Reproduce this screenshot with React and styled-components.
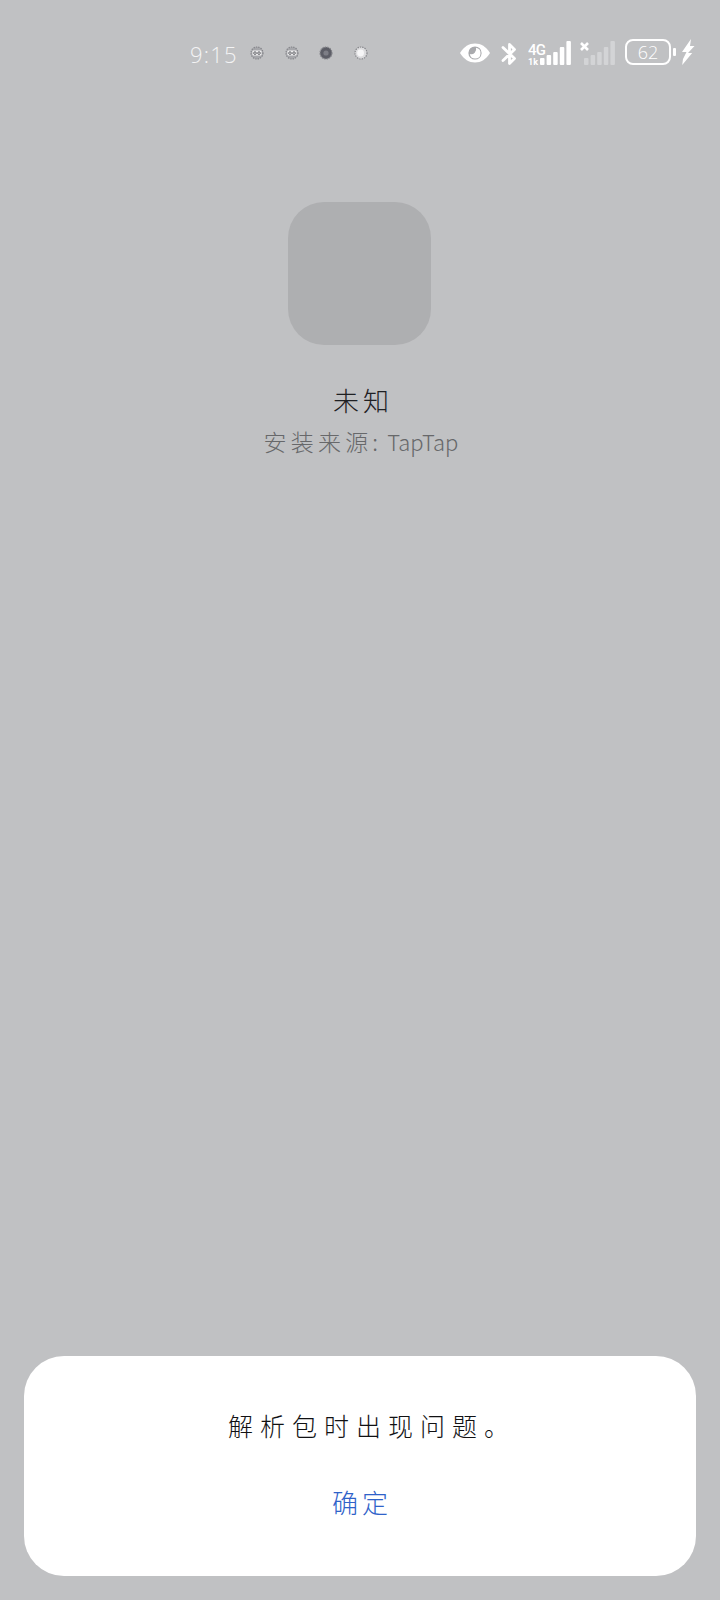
import React from 'react';
import styled, { createGlobalStyle } from 'styled-components';

const GlobalStyle = createGlobalStyle`
    html, body {
        margin: 0;
        padding: 0;
        background: #c0c1c3;
    }
    body {
        font-family: "Noto Sans CJK SC", "Noto Sans", sans-serif;
    }
`

const Page = styled.div`
    width: 720px;
    height: 1600px;
    display: flex;
    flex-direction: column;
    background: #c0c1c3;
    overflow: hidden;
`

const StatusBar = styled.div`
    height: 66px;
    padding: 39px 25px 0 190px;
    box-sizing: border-box;
    display: flex;
    align-items: flex-start;
    color: #fff;
`

const Time = styled.span`
    width: 56px;
    font-family: "Open Sans", sans-serif;
    font-weight: 300;
    font-size: 22px;
    line-height: 30px;
    letter-spacing: 1.2px;
    color: #f4f4f5;
`

const NotifRow = styled.div`
    display: flex;
    gap: 20.6px;
    margin-top: 7px;
    margin-left: 4px;
`

const StatusIcons = styled.div`
    margin-left: auto;
    display: flex;
    align-items: flex-start;
    height: 27px;
`

const Slot = styled.div`
    margin-left: ${p => p.$gap || 0}px;
    margin-top: ${p => p.$top || 0}px;
    display: flex;
`

const Battery = styled.div`
    width: 46px;
    height: 26px;
    box-sizing: border-box;
    border: 2px solid #fff;
    border-radius: 8px;
    margin-left: 10px;
    display: flex;
    align-items: center;
    justify-content: center;
    font-family: "Open Sans", sans-serif;
    font-weight: 300;
    font-size: 18px;
    color: #fff;
`

const Nub = styled.div`
    width: 3px;
    height: 8px;
    margin: 9px 0 0 2px;
    background: #fff;
    border-radius: 1px;
`

const Info = styled.div`
    display: flex;
    flex-direction: column;
    align-items: center;
    padding: 136px 2px 0 0;
    flex: 1;
`

const AppIcon = styled.div`
    width: 143px;
    height: 143px;
    border-radius: 36px;
    background: #aeafb1;
`

const AppName = styled.div`
    margin-top: 36px;
    padding-left: 8px;
    font-size: 26px;
    font-weight: 300;
    line-height: 38px;
    letter-spacing: 4px;
    color: #1f2023;
`

const Source = styled.div`
    margin-top: 5px;
    padding-left: 4px;
    font-size: 23px;
    font-weight: 300;
    line-height: 34px;
    letter-spacing: 4.2px;
    color: #67686a;
`

const Latin = styled.span`
    letter-spacing: 0;
    font-size: 22px;
`

const Dialog = styled.div`
    margin: 0 24px 24px;
    height: 220px;
    box-sizing: border-box;
    padding-top: 49px;
    background: #fff;
    border-radius: 40px;
    display: flex;
    flex-direction: column;
    align-items: center;
`

const Message = styled.div`
    padding-left: 24px;
    font-size: 25px;
    font-weight: 300;
    line-height: 40px;
    letter-spacing: 7px;
    color: #111113;
`

const ConfirmButton = styled.button`
    margin-top: 37px;
    padding: 0 2px 0 6px;
    border: none;
    background: none;
    font-family: inherit;
    font-size: 26px;
    font-weight: 300;
    line-height: 40px;
    letter-spacing: 4px;
    color: #2f62c9;
`

const SignalWrap = styled.div`
    margin-top: 2px;
`

function NotifIcon({ dark, open }) {
    const fill = dark ? '#5c5d66' : '#a6a7ab'
    return (
        <svg width="14" height="14" viewBox="0 0 14 14">
            <circle cx="7" cy="7" r="6" fill={open ? '#dcdcde' : fill} stroke={open ? '#87888c' : '#85868b'} strokeWidth="1.2" strokeDasharray="1.4 1" />
            {!dark && !open && (
                <>
                    <rect x="2.4" y="4.6" width="9.2" height="5" rx="1" fill="#eeeeef" />
                    <circle cx="5" cy="7.1" r="1.3" fill="none" stroke="#55565b" strokeWidth="0.9" />
                    <circle cx="9" cy="7.1" r="1.3" fill="none" stroke="#55565b" strokeWidth="0.9" />
                </>
            )}
            {dark && <circle cx="7" cy="7" r="2.6" fill="#7d7e86" />}
            {open && <circle cx="6.6" cy="7" r="3.4" fill="#f6f6f7" />}
        </svg>
    )
}

function Eye() {
    return (
        <svg width="32" height="22" viewBox="0 0 32 22">
            <path d="M1 11C5 4.5 10 1.5 16 1.5S27 4.5 31 11c-4 6.500-9 9.500-15 9.500S5 17.500 1 11z" fill="#fff" />
            <circle cx="16" cy="11" r="6.600" fill="#a9aaad" />
            <path d="M17 5.800a5.400 5.400 0 1 1-6.200 6.200 5 5 0 0 0 6.200-6.200z" fill="#fff" />
        </svg>
    )
}

function Bluetooth() {
    return (
        <svg width="18" height="24" viewBox="0 0 18 24">
            <path d="M3 5.500L14.500 16.500 9.500 21.500V15M9.500 9V2.500L14.500 7.500 3 18.500" fill="none" stroke="#fff" strokeWidth="2.800" strokeLinejoin="round" strokeLinecap="round" />
        </svg>
    )
}

function Signal({ color, heights }) {
    return (
        <svg width="31" height="24" viewBox="0 0 31 24">
            {heights.map((h, i) => (
                <rect key={i} x={i * 6.6} y={24 - h} width="4.500" height={h} rx="1" fill={color} />
            ))}
        </svg>
    )
}

function NetLabel() {
    return (
        <svg width="20" height="24" viewBox="0 0 20 24">
            <text x="0" y="13" fontFamily="Roboto, sans-serif" fontWeight="500" fontSize="15" fill="#fff" textLength="18">4G</text>
            <text x="0" y="23" fontFamily="Roboto, sans-serif" fontWeight="700" fontSize="9" fill="#fff" textLength="10">1k</text>
        </svg>
    )
}

function NoSim() {
    return (
        <svg width="9" height="9" viewBox="0 0 9 9">
            <path d="M1 1l7 7M8 1L1 8" stroke="#fff" strokeWidth="2.600" />
        </svg>
    )
}

function Bolt() {
    return (
        <svg width="14" height="26" viewBox="0 0 14 26">
            <path d="M10 0L1 13h4.500L2 20l-.8 6 10-12H7l6.500-7H9z" fill="#fff" />
        </svg>
    )
}

export default function App() {
    return (
        <Page>
            <GlobalStyle />
            <StatusBar>
                <Time>9:15</Time>
                <NotifRow>
                    <NotifIcon />
                    <NotifIcon />
                    <NotifIcon dark />
                    <NotifIcon open />
                </NotifRow>
                <StatusIcons>
                    <Slot $top={3}><Eye /></Slot>
                    <Slot $gap={9} $top={3}><Bluetooth /></Slot>
                    <Slot $gap={10} $top={3}><NetLabel /></Slot>
                    <Slot $gap={-8}><SignalWrap><Signal color="#fff" heights={[7, 10, 13, 18, 24]} /></SignalWrap></Slot>
                    <Slot $gap={9} $top={3}><NoSim /></Slot>
                    <Slot $gap={-5}><SignalWrap><Signal color="#d3d4d6" heights={[7, 10, 13, 18, 24]} /></SignalWrap></Slot>
                    <Battery>62</Battery>
                    <Nub />
                    <Slot $gap={5}><Bolt /></Slot>
                </StatusIcons>
            </StatusBar>
            <Info>
                <AppIcon />
                <AppName>未知</AppName>
                <Source>安装来源:<Latin> TapTap</Latin></Source>
            </Info>
            <Dialog>
                <Message>解析包时出现问题。</Message>
                <ConfirmButton>确定</ConfirmButton>
            </Dialog>
        </Page>
    )
}
